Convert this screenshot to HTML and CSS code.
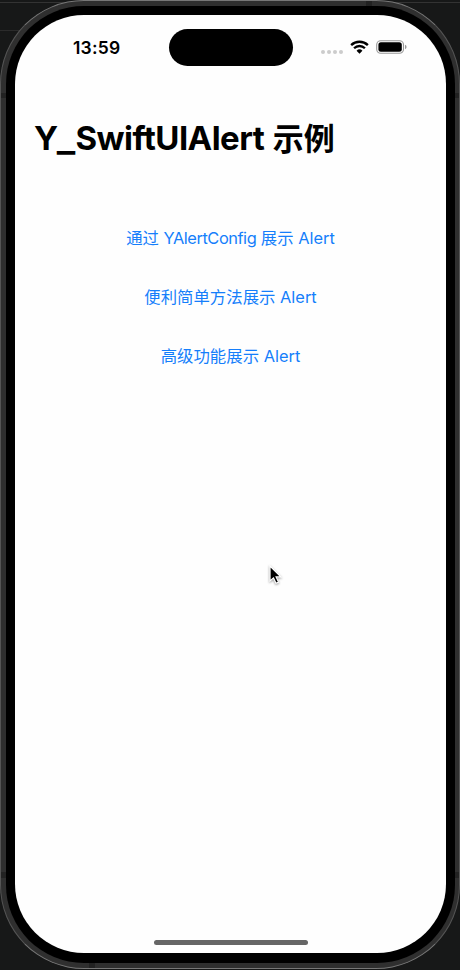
FILE: index.html
```html
<!DOCTYPE html>
<html lang="zh-CN">
<head>
<meta charset="utf-8">
<title>Y_SwiftUIAlert 示例</title>
<link rel="stylesheet" href="styles.css">
</head>
<body>
<div class="phone">
  <div class="bezel">
    <div class="screen">
      <header class="status">
        <time class="clock">13:59</time>
        <div class="island"></div>
        <div class="indicators">
          <div class="signal"><i></i><i></i><i></i><i></i></div>
          <svg class="wifi" width="19" height="14" viewBox="0 0 20 14">
            <g fill="none" stroke="#000" stroke-width="2.5">
              <path d="M1.2 5.1A12.6 12.6 0 0 1 18.8 5.1"/>
              <path d="M4.3 8.3A8.2 8.2 0 0 1 15.7 8.3"/>
            </g>
            <path d="M10 14L6.9 10.9A4.5 4.5 0 0 1 13.1 10.9Z"/>
          </svg>
          <svg class="battery" width="31" height="14" viewBox="0 0 31 14">
            <rect x=".7" y=".7" width="26.8" height="12.6" rx="4" fill="none" stroke="#999" stroke-width="1.1"/>
            <rect x="2.4" y="2.3" width="23.4" height="9.4" rx="2.5"/>
            <path d="M29 4.8Q30.6 5.4 30.6 7T29 9.2Z" fill="#999"/>
          </svg>
        </div>
      </header>
      <h1 class="title"><span class="latin">Y<span class="rule">_</span>SwiftUIAlert</span> <span class="han">示例</span></h1>
      <main class="actions">
        <button class="action">通过 <span class="name">YAlertConfig</span> 展示 Alert</button>
        <button class="action">便利简单方法展示 Alert</button>
        <button class="action">高级功能展示 Alert</button>
      </main>
      <div class="home"></div>
    </div>
  </div>
</div>
<svg class="cursor" width="18" height="24" viewBox="0 0 18 24">
  <path d="M3 2V17L6.5 13.9L9 19.2L11.5 18.1L9.1 12.9H13.8Z" fill="#000" stroke="#fff" stroke-width="1.2"/>
</svg>
</body>
</html>
```
FILE: styles.css
```css
* { box-sizing: border-box; }
body {
  margin: 0;
  width: 460px;
  height: 970px;
  overflow: hidden;
  background:
    linear-gradient(#333, #333) 0 2px / 100% 1px no-repeat,
    linear-gradient(#2b2b2b, #2b2b2b) 0 30px / 30px 1px no-repeat,
    #171818;
  font-family: Inter, "Noto Sans CJK SC", sans-serif;
  color: #000;
}
.phone {
  height: 969px;
  padding: 5px 4px 5px 5px;
  border: 1px solid #777;
  border-left-color: #555;
  border-right-color: #555;
  border-radius: 84px;
  background:
    linear-gradient(#222, #222) 0 92px / 100% 5px no-repeat,
    linear-gradient(#222, #222) 0 871px / 100% 6px no-repeat,
    linear-gradient(#222, #222) 88px 100% / 6px 6px no-repeat,
    linear-gradient(#222, #222) 365px 0 / 6px 6px no-repeat,
    #2f2f2f;
}
.bezel {
  height: 957px;
  padding: 9px 9px 10px;
  border-radius: 78px;
  background: #000;
}
.screen {
  display: flex;
  flex-direction: column;
  height: 938px;
  border-radius: 69px;
  background: #fefefe;
}
.status {
  display: flex;
  height: 64px;
  padding-top: 14px;
}
.clock {
  width: 154px;
  padding-left: 58px;
  line-height: 37px;
  font-size: 17.5px;
  font-weight: 600;
  letter-spacing: .2px;
}
.island {
  width: 123.5px;
  height: 36.5px;
  border-radius: 19px;
  background: #000;
}
.indicators {
  display: flex;
  align-items: center;
  height: 36px;
  margin-left: 28.5px;
}
.signal {
  display: flex;
  gap: 2px;
  width: 29px;
  padding-top: 9px;
}
.signal i {
  width: 4px;
  height: 4px;
  border-radius: 50%;
  background: #ccc;
}
.battery { margin-left: 7px; }
.title {
  display: flex;
  align-items: baseline;
  height: 48px;
  margin: 34px 0 0 19px;
  line-height: 50px;
  font-size: 33px;
  font-weight: 700;
  white-space: nowrap;
}
.latin { letter-spacing: -.54px; }
.rule {
  display: inline-block;
  margin: 0 2.2px 0 .5px;
  transform: translateY(1px) scaleX(1.18);
}
.han {
  margin-left: 8.5px;
  font-size: 31px;
}
.actions {
  display: flex;
  flex-direction: column;
  align-items: center;
  gap: 35px;
  margin-top: 65px;
}
.action {
  height: 24px;
  padding: 0;
  border: 0;
  background: none;
  color: #157efb;
  font: 400 16.4px/24px Inter, "Noto Sans CJK SC", sans-serif;
  white-space: nowrap;
}
.name { letter-spacing: -.45px; }
.home {
  width: 154px;
  height: 5px;
  margin: auto auto 8px 139px;
  border-radius: 3px;
  background: #666;
}
.cursor {
  position: absolute;
  left: 267px;
  top: 564px;
  filter: drop-shadow(0 1px 1px #0006);
}
```
